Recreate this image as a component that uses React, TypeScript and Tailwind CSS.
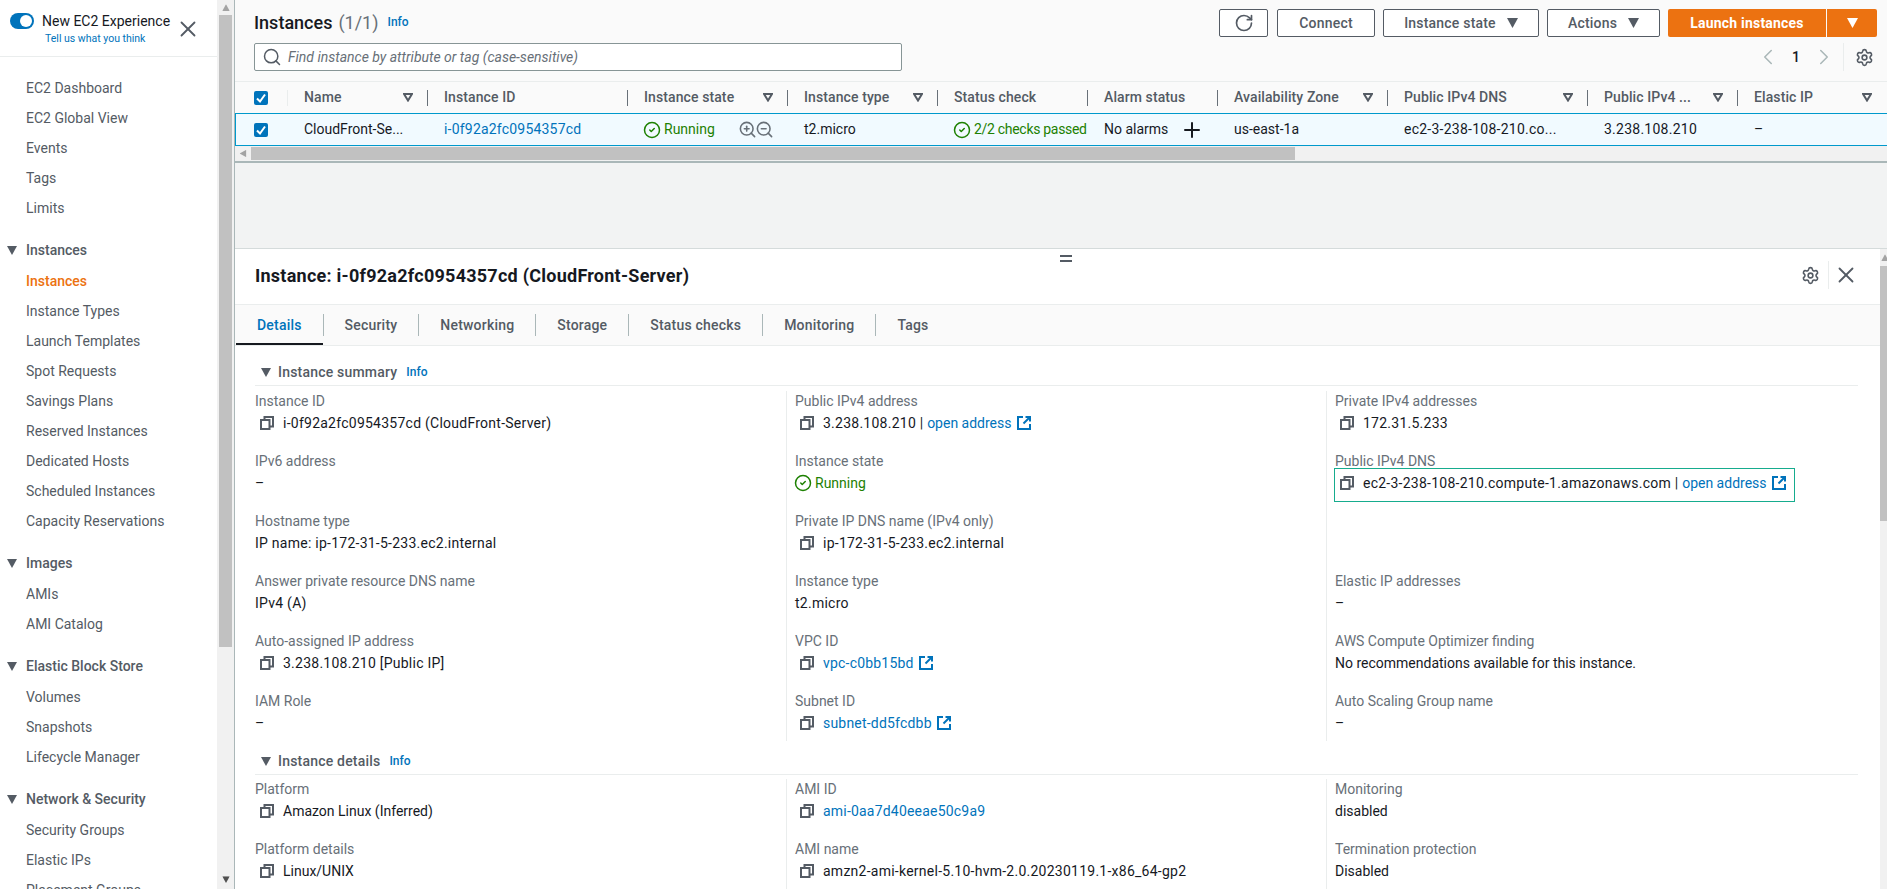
import { ChevronLeft, ChevronRight, CircleCheck, Plus, RotateCw, Search, Settings, X, ZoomIn, ZoomOut } from "lucide-react";

const navGroups = [
  { items: ["EC2 Dashboard", "EC2 Global View", "Events", "Tags", "Limits"] },
  {
    title: "Instances",
    items: [
      "Instances",
      "Instance Types",
      "Launch Templates",
      "Spot Requests",
      "Savings Plans",
      "Reserved Instances",
      "Dedicated Hosts",
      "Scheduled Instances",
      "Capacity Reservations",
    ],
  },
  { title: "Images", items: ["AMIs", "AMI Catalog"] },
  { title: "Elastic Block Store", items: ["Volumes", "Snapshots", "Lifecycle Manager"] },
  { title: "Network & Security", items: ["Security Groups", "Elastic IPs", "Placement Groups"] },
];

function Caret({ className = "" }: { className?: string }) {
  return (
    <svg viewBox="0 0 10 9" className={"h-[9px] w-[10px] shrink-0 " + className} fill="currentColor">
      <path d="M0 0h10L5 9z" />
    </svg>
  );
}

function FilterCaret() {
  return (
    <svg viewBox="0 0 10 9" className="h-[9px] w-[10px] shrink-0 text-[#545b64]" fill="none" stroke="currentColor" strokeWidth="2">
      <path d="M1 1h8L5 7.5z" />
    </svg>
  );
}

function CopyIcon() {
  return (
    <svg viewBox="0 0 14 14" className="h-[14px] w-[14px] shrink-0 text-[#545b64]" fill="none" stroke="currentColor" strokeWidth="2">
      <path d="M1 4h8.5v9H1z" />
      <path d="M4.5 3.5V1H13v9.5h-3" />
    </svg>
  );
}

function ExternalIcon() {
  return (
    <svg viewBox="0 0 14 14" className="h-[14px] w-[14px] shrink-0 text-[#0073bb]" fill="none" stroke="currentColor" strokeWidth="2">
      <path d="M6 1H1v12h12V8" />
      <path d="M8.5 1H13v4.5" />
      <path d="M13 1 6.5 7.5" />
    </svg>
  );
}

function Sidebar() {
  return (
    <aside className="flex h-full w-[235px] shrink-0 border-r border-[#aab7b8]">
      <div className="w-[217px] shrink-0 overflow-hidden bg-white text-[14px] text-[#545b64]">
        <div className="relative h-[57px] border-b border-[#eaeded]">
          <div className="flex items-center pl-[10px] pt-[13px]">
            <span className="relative h-[16px] w-[24px] rounded-full bg-[#0073bb]">
              <span className="absolute right-[2px] top-[2px] h-[12px] w-[12px] rounded-full bg-white" />
            </span>
            <span className="ml-[8px] leading-[16px] text-[#16191f]">New EC2 Experience</span>
          </div>
          <div className="pl-[45px] pt-[2px] text-[10.5px] leading-[16px] text-[#0073bb]">Tell us what you think</div>
          <X className="absolute left-[175px] top-[16px] h-[26px] w-[26px] text-[#545b64]" strokeWidth={1.7} />
        </div>
        <div className="pt-[16px]">
          {navGroups.map((group, i) => (
            <div key={i} className="pb-[12px]">
              {group.title && (
                <div className="flex h-[31px] items-center pl-[7px] font-medium">
                  <Caret />
                  <span className="ml-[9px]">{group.title}</span>
                </div>
              )}
              {group.items.map((item) => (
                <div
                  key={item}
                  className={"flex h-[30px] items-center pl-[26px] " + (i === 1 && item === "Instances" ? "font-medium text-[#ec7211]" : "")}
                >
                  {item}
                </div>
              ))}
            </div>
          ))}
        </div>
      </div>
      <div className="flex flex-1 flex-col items-center bg-[#f1f1f1]">
        <div className="flex h-[15px] items-center text-[#a3a3a3]">
          <Caret className="rotate-180 scale-75" />
        </div>
        <div className="h-[632px] w-[13px] bg-[#c1c1c1]" />
        <div className="flex flex-1 items-end pb-[5px] text-[#505050]">
          <Caret className="scale-75" />
        </div>
      </div>
    </aside>
  );
}

function OutlineButton({ label, width }: { label: string; width: string }) {
  return (
    <button type="button" className={"flex h-[28px] items-center justify-center gap-[11px] rounded-[2px] border border-[#545b64] bg-white text-[14px] font-medium tracking-[0.2px] text-[#545b64] " + width}>
      {label}
      {label !== "Connect" && <Caret className="h-[10px] w-[11px]" />}
    </button>
  );
}

function TopBar() {
  return (
    <div className="flex h-[81px] shrink-0 justify-between bg-[#fafafa] pl-[19px] pr-[10px] pt-[9px]">
      <div>
        <div className="flex h-[28px] items-center pb-[2px]">
          <span className="text-[18px] font-medium text-[#16191f]">Instances</span>
          <span className="ml-[6px] text-[18px] text-[#687078]">(1/1)</span>
          <span className="ml-[9px] text-[12px] font-medium text-[#0073bb]">Info</span>
        </div>
        <div className="mt-[6px] flex h-[28px] w-[648px] items-center rounded-[2px] border border-[#879596] bg-white pl-[7px]">
          <Search className="h-[20px] w-[20px] text-[#545b64]" strokeWidth={1.8} />
          <span className="ml-[6px] text-[14px] italic text-[#687078]">Find instance by attribute or tag (case-sensitive)</span>
        </div>
      </div>
      <div>
        <div className="flex items-center">
          <button type="button" className="mr-[9px] flex h-[28px] w-[49px] items-center justify-center rounded-[2px] border border-[#545b64] bg-white text-[#545b64]">
            <RotateCw className="h-[20px] w-[20px]" strokeWidth={2} />
          </button>
          <div className="flex gap-[8px]">
            <OutlineButton label="Connect" width="w-[98px]" />
            <OutlineButton label="Instance state" width="w-[156px]" />
            <OutlineButton label="Actions" width="w-[113px]" />
          </div>
          <div className="ml-[8px] flex gap-px">
            <button type="button" className="flex h-[28px] w-[158px] items-center justify-center rounded-l-[2px] bg-[#ec7211] text-[14px] font-bold tracking-[0.2px] text-white">
              Launch instances
            </button>
            <button type="button" className="flex h-[28px] w-[50px] items-center justify-center rounded-r-[2px] bg-[#ec7211] text-white">
              <Caret className="h-[10px] w-[11px]" />
            </button>
          </div>
        </div>
        <div className="mt-[6px] flex h-[28px] items-center justify-end">
          <ChevronLeft className="h-[26px] w-[26px] text-[#aab7b8]" strokeWidth={1.4} />
          <span className="mx-[11px] text-[14px] font-medium text-[#16191f]">1</span>
          <ChevronRight className="h-[26px] w-[26px] text-[#aab7b8]" strokeWidth={1.4} />
          <span className="ml-[6px] h-[28px] w-px bg-[#eaeded]" />
          <Settings className="ml-[11px] mr-[3px] h-[19px] w-[19px] text-[#545b64]" strokeWidth={2} />
        </div>
      </div>
    </div>
  );
}

const columns = [
  { name: "Name", width: "w-[140px]", filter: true },
  { name: "Instance ID", width: "w-[200px]", filter: false },
  { name: "Instance state", width: "w-[160px]", filter: true },
  { name: "Instance type", width: "w-[150px]", filter: true },
  { name: "Status check", width: "w-[150px]", filter: false },
  { name: "Alarm status", width: "w-[130px]", filter: false },
  { name: "Availability Zone", width: "w-[170px]", filter: true },
  { name: "Public IPv4 DNS", width: "w-[200px]", filter: true },
  { name: "Public IPv4 ...", width: "w-[150px]", filter: true },
  { name: "Elastic IP", width: "w-[149px]", filter: true },
];

function Checkbox() {
  return (
    <span className="flex h-[14px] w-[14px] items-center justify-center rounded-[2px] bg-[#0073bb]">
      <svg viewBox="0 0 14 14" className="h-[14px] w-[14px]" fill="none" stroke="white" strokeWidth="2">
        <path d="M3 7.5 6 10.5 11 3.5" />
      </svg>
    </span>
  );
}

function InstancesTable() {
  return (
    <div className="shrink-0 text-[14px]">
      <div className="flex h-[32px] items-center border-t border-[#eaeded] bg-[#fafafa] font-medium tracking-[0.1px] text-[#545b64]">
        <div className="flex h-full w-[53px] items-center justify-between pl-[19px]">
          <Checkbox />
          <span className="h-[16px] w-px bg-[#eaeded]" />
        </div>
        {columns.map((col, i) => (
          <div key={col.name} className={"flex h-full items-center pl-[16px] " + col.width}>
            <span className="flex-1 whitespace-nowrap">{col.name}</span>
            {col.filter && <FilterCaret />}
            <span className={"ml-[14px] h-[16px] w-px " + (i === columns.length - 1 ? "bg-transparent" : "bg-[#687078]")} />
          </div>
        ))}
      </div>
      <div className="flex h-[33px] items-center border border-r-0 border-[#0099cc] bg-[#f1faff] text-[#16191f]">
        <div className="w-[52px] pl-[18px]">
          <Checkbox />
        </div>
        <div className="w-[140px] pl-[16px]">CloudFront-Se...</div>
        <div className="w-[200px] pl-[16px] tracking-[0.2px] text-[#0073bb]">i-0f92a2fc0954357cd</div>
        <div className="flex w-[160px] items-center pl-[15px] text-[#1d8102]">
          <CircleCheck className="h-[18px] w-[18px]" strokeWidth={2} />
          <span className="ml-[3px] flex-1">Running</span>
          <ZoomIn className="h-[19px] w-[19px] text-[#687078]" strokeWidth={2} />
          <ZoomOut className="-ml-[2px] mr-[14px] h-[19px] w-[19px] text-[#687078]" strokeWidth={2} />
        </div>
        <div className="w-[150px] pl-[16px]">t2.micro</div>
        <div className="flex w-[150px] items-center whitespace-nowrap pl-[15px] text-[#1d8102]">
          <CircleCheck className="h-[18px] w-[18px] shrink-0" strokeWidth={2} />
          <span className="ml-[3px] tracking-[-0.3px]">2/2 checks passed</span>
        </div>
        <div className="flex w-[130px] items-center pl-[16px]">
          <span>No alarms</span>
          <Plus className="ml-[12px] h-[24px] w-[24px]" strokeWidth={2} />
        </div>
        <div className="w-[170px] pl-[16px]">us-east-1a</div>
        <div className="w-[200px] whitespace-nowrap pl-[16px] tracking-[0.25px]">ec2-3-238-108-210.co...</div>
        <div className="w-[150px] pl-[16px] tracking-[0.25px]">3.238.108.210</div>
        <div className="w-[149px] pl-[16px]">–</div>
      </div>
      <div className="flex h-[17px] items-start border-b-2 border-[#aab7b8] bg-[#f1f1f1] pt-[1px]">
        <div className="flex h-[13px] w-[16px] items-center justify-center text-[#a3a3a3]">
          <Caret className="rotate-90 scale-75" />
        </div>
        <div className="h-[13px] w-[1044px] bg-[#c1c1c1]" />
      </div>
    </div>
  );
}

type Field = {
  label?: string;
  value?: string;
  copy?: boolean;
  link?: string;
  external?: boolean;
  status?: boolean;
  highlight?: boolean;
};

const summary: Field[][] = [
  [
    { label: "Instance ID", value: "i-0f92a2fc0954357cd (CloudFront-Server)", copy: true },
    { label: "IPv6 address", value: "–" },
    { label: "Hostname type", value: "IP name: ip-172-31-5-233.ec2.internal" },
    { label: "Answer private resource DNS name", value: "IPv4 (A)" },
    { label: "Auto-assigned IP address", value: "3.238.108.210 [Public IP]", copy: true },
    { label: "IAM Role", value: "–" },
  ],
  [
    { label: "Public IPv4 address", value: "3.238.108.210 | ", copy: true, link: "open address", external: true },
    { label: "Instance state", value: "Running", status: true },
    { label: "Private IP DNS name (IPv4 only)", value: "ip-172-31-5-233.ec2.internal", copy: true },
    { label: "Instance type", value: "t2.micro" },
    { label: "VPC ID", copy: true, link: "vpc-c0bb15bd", external: true },
    { label: "Subnet ID", copy: true, link: "subnet-dd5fcdbb", external: true },
  ],
  [
    { label: "Private IPv4 addresses", value: "172.31.5.233", copy: true },
    { label: "Public IPv4 DNS", value: "ec2-3-238-108-210.compute-1.amazonaws.com | ", copy: true, link: "open address", external: true, highlight: true },
    {},
    { label: "Elastic IP addresses", value: "–" },
    { label: "AWS Compute Optimizer finding", value: "No recommendations available for this instance." },
    { label: "Auto Scaling Group name", value: "–" },
  ],
];

const details: Field[][] = [
  [
    { label: "Platform", value: "Amazon Linux (Inferred)", copy: true },
    { label: "Platform details", value: "Linux/UNIX", copy: true },
  ],
  [
    { label: "AMI ID", copy: true, link: "ami-0aa7d40eeae50c9a9" },
    { label: "AMI name", value: "amzn2-ami-kernel-5.10-hvm-2.0.20230119.1-x86_64-gp2", copy: true },
  ],
  [
    { label: "Monitoring", value: "disabled" },
    { label: "Termination protection", value: "Disabled" },
  ],
];

function FieldValue({ field }: { field: Field }) {
  const digits = /\d/.test(field.value ?? "");
  const linkDigits = /\d/.test(field.link ?? "");
  return (
    <>
      {field.copy && (
        <span className="ml-[5px] mr-[9px]">
          <CopyIcon />
        </span>
      )}
      {field.status && <CircleCheck className="-ml-px mr-[3px] h-[18px] w-[18px] text-[#1d8102]" strokeWidth={2} />}
      <span className={"whitespace-pre " + (field.status ? "text-[#1d8102] " : "") + (digits ? "tracking-[0.25px]" : "")}>{field.value}</span>
      {field.link && <span className={"text-[#0073bb] " + (linkDigits ? "tracking-[0.2px]" : "")}>{field.link}</span>}
      {field.external && (
        <span className="ml-[5px]">
          <ExternalIcon />
        </span>
      )}
    </>
  );
}

function FieldCell({ field }: { field: Field }) {
  return (
    <div className="h-[60px]">
      <div className="h-[20px] leading-[20px] text-[#687078]">{field.label}</div>
      {field.highlight ? (
        <div className="-ml-px mt-[-3px] flex h-[34px] w-[461px] items-start border border-[#16ac8e] pt-[4px] leading-[20px] [&>span]:flex [&>span]:h-[20px] [&>span]:items-center">
          <FieldValue field={field} />
        </div>
      ) : (
        <div className="mt-[2px] flex h-[20px] items-center leading-[20px]">
          <FieldValue field={field} />
        </div>
      )}
    </div>
  );
}

function FieldColumns({ data, height }: { data: Field[][]; height: string }) {
  return (
    <div className={"flex overflow-hidden " + height}>
      <div className="w-[531px] shrink-0">
        {data[0].map((f, i) => (
          <FieldCell key={i} field={f} />
        ))}
      </div>
      <div className="w-[540px] shrink-0 border-l border-[#eaeded] pl-[8px]">
        {data[1].map((f, i) => (
          <FieldCell key={i} field={f} />
        ))}
      </div>
      <div className="w-[532px] shrink-0 border-l border-[#eaeded] pl-[8px]">
        {data[2].map((f, i) => (
          <FieldCell key={i} field={f} />
        ))}
      </div>
    </div>
  );
}

function SectionHeader({ title }: { title: string }) {
  return (
    <div className="flex h-[26px] items-start border-b border-[#eaeded] pl-[6px] pt-[2px]">
      <span className="flex h-[20px] items-center text-[#545b64]">
        <Caret />
      </span>
      <span className="ml-[7px] font-medium leading-[20px] tracking-[0.2px] text-[#545b64]">{title}</span>
      <span className="ml-[9px] text-[12px] font-medium leading-[20px] text-[#0073bb]">Info</span>
    </div>
  );
}

const tabs = ["Details", "Security", "Networking", "Storage", "Status checks", "Monitoring", "Tags"];

function DetailPanel() {
  return (
    <section className="flex min-h-0 flex-1 border-t border-[#d5dbdb] bg-white">
      <div className="relative min-w-0 flex-1">
        <span className="absolute left-[825px] top-[6px] h-[7px] w-[12px] border-y-2 border-[#545b64]" />
        <div className="flex h-[56px] items-center justify-between border-b border-[#eaeded] pb-[3px] pl-[20px] pr-[21px]">
          <h2 className="text-[18px] font-bold tracking-[0.25px] text-[#16191f]">Instance: i-0f92a2fc0954357cd (CloudFront-Server)</h2>
          <div className="flex items-center">
            <Settings className="h-[19px] w-[19px] text-[#545b64]" strokeWidth={2} />
            <span className="ml-[8px] mr-[4px] h-[28px] w-px bg-[#eaeded]" />
            <X className="h-[26px] w-[26px] text-[#545b64]" strokeWidth={1.7} />
          </div>
        </div>
        <div className="flex h-[41px] items-center border-b border-[#eaeded] bg-[#fafafa] pl-px text-[14px] font-medium tracking-[0.2px] text-[#545b64]">
          {tabs.map((tab, i) => (
            <div key={tab} className={"relative flex h-[22px] items-center px-[21px] " + (i === tabs.length - 1 ? "" : "border-r border-[#aab7b8]")}>
              <span className={i === 0 ? "text-[#0073bb]" : ""}>{tab}</span>
              {i === 0 && <span className="absolute -bottom-[9px] left-0 right-0 h-[2px] bg-[#16191f]" />}
            </div>
          ))}
        </div>
        <div className="pl-[20px] pr-[22px] pt-[14px] text-[14px] text-[#16191f]">
          <SectionHeader title="Instance summary" />
          <FieldColumns data={summary} height="h-[355px] pt-[5px]" />
          <div className="mt-[8px]">
            <SectionHeader title="Instance details" />
          </div>
          <FieldColumns data={details} height="h-[120px] pt-[4px]" />
        </div>
      </div>
      <div className="flex w-[7px] shrink-0 flex-col overflow-hidden bg-[#f1f1f1]">
        <div className="flex h-[17px] items-center text-[#a3a3a3]">
          <Caret className="scale-75 rotate-180" />
        </div>
        <div className="h-[255px] bg-[#c1c1c1]" />
      </div>
    </section>
  );
}

export default function App() {
  return (
    <div className="flex h-[889px] w-[1887px] overflow-hidden bg-white font-['Roboto',sans-serif]">
      <Sidebar />
      <main className="flex min-w-0 flex-1 flex-col bg-[#f2f3f3]">
        <TopBar />
        <InstancesTable />
        <div className="h-[85px] shrink-0" />
        <DetailPanel />
      </main>
    </div>
  );
}
